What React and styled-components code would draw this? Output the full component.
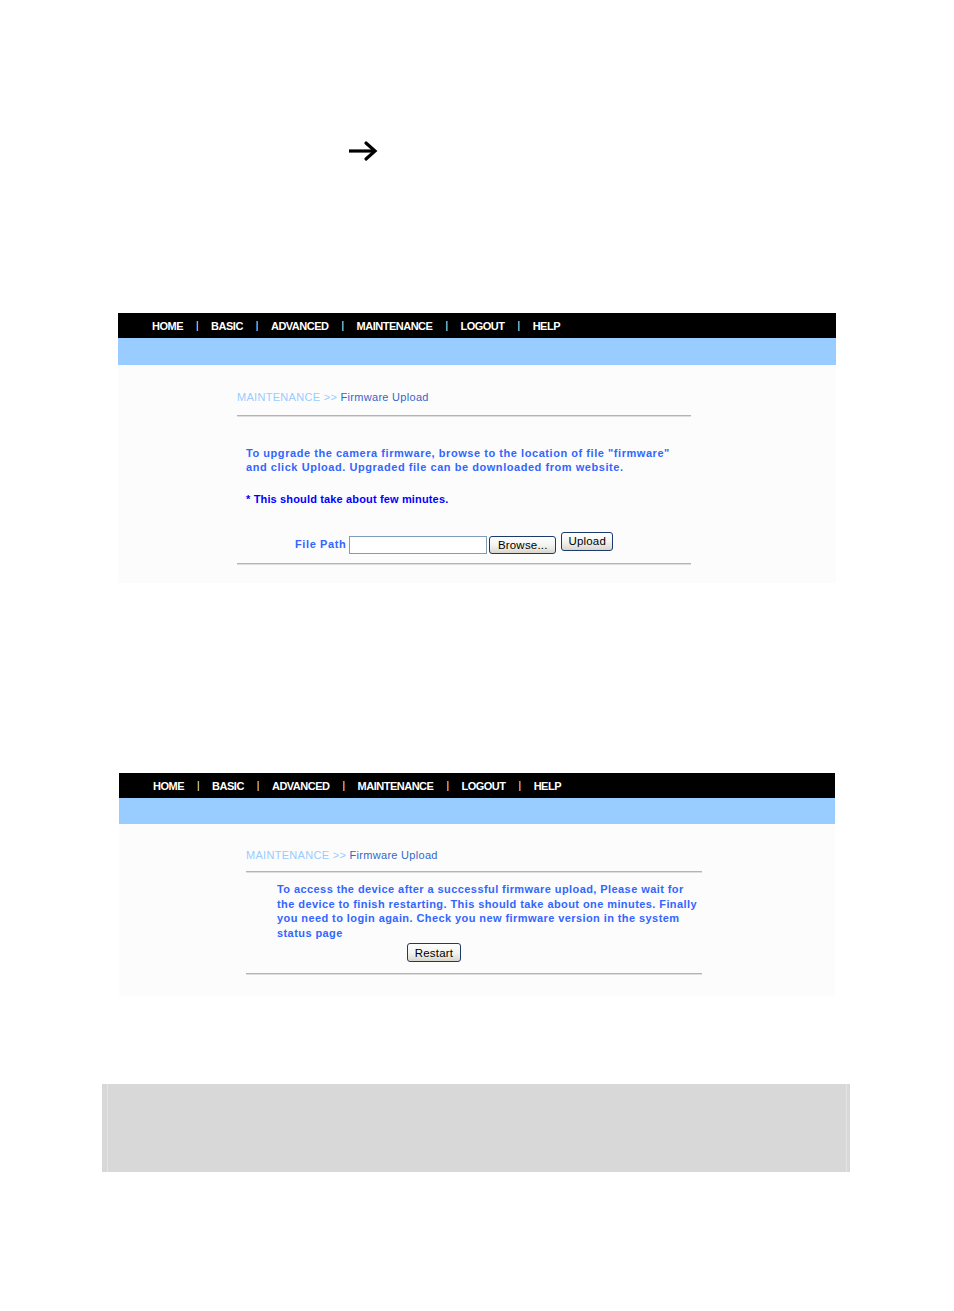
import React from "react";
import styled, { createGlobalStyle } from "styled-components";

const GlobalStyle = createGlobalStyle`
  html, body {
    margin: 0;
    padding: 0;
    background: #ffffff;
  }
  body {
    font-family: "Liberation Sans", Arial, sans-serif;
    width: 954px;
  }
`;

const navItems = ["HOME", "BASIC", "ADVANCED", "MAINTENANCE", "LOGOUT", "HELP"];

const NavMenu = () => (
  <NavBar>
    {navItems.map((item, i) => (
      <React.Fragment key={item}>
        {i > 0 && <NavSep>|</NavSep>}
        <NavItem>{item}</NavItem>
      </React.Fragment>
    ))}
  </NavBar>
);

const Breadcrumb = () => (
  <Crumb>
    <CrumbParent>MAINTENANCE &gt;&gt; </CrumbParent>
    <CrumbCurrent>Firmware Upload</CrumbCurrent>
  </Crumb>
);

const App = () => {
  return (
    <Page>
      <GlobalStyle />
      <ArrowRow>
        <svg width="32" height="22" viewBox="0 0 32 22">
          <path d="M2 11 H27" stroke="#000" strokeWidth="3.2" fill="none" />
          <path
            d="M19 3 L28 11 L19 19"
            stroke="#000"
            strokeWidth="3.2"
            fill="none"
            strokeLinecap="round"
            strokeLinejoin="miter"
          />
        </svg>
      </ArrowRow>

      <Panel $left={118} $width={718} $top={151}>
        <NavMenu />
        <BlueBar $height={27} />
        <Content $pt={25} $pb={18}>
          <Section $left={119} $width={454}>
            <Breadcrumb />
            <Rule $mt={11} />
            <Message $mt={29} $indent={9}>
              To upgrade the camera firmware, browse to the location of file
              "firmware"
              <br />
              and click Upload. Upgraded file can be downloaded from website.
            </Message>
            <Note>* This should take about few minutes.</Note>
            <FileRow>
              <FieldLabel>File Path</FieldLabel>
              <PathInput />
              <XPButton $w={67} $h={18}>Browse...</XPButton>
              <XPButton $w={52} $h={19} $ml={5} $up>Upload</XPButton>
            </FileRow>
            <Rule $mt={10} />
          </Section>
        </Content>
      </Panel>

      <Panel $left={119} $width={716} $top={190}>
        <NavMenu />
        <BlueBar $height={26} />
        <Content $pt={24} $pb={21}>
          <Section $left={127} $width={456}>
            <Breadcrumb />
            <Rule $mt={9} />
            <Message $mt={9} $indent={31} $lh={14.5} $ls={0.42} $nowrap>
              To access the device after a successful firmware upload, Please
              wait for
              <br />
              the device to finish restarting. This should take about one
              minutes. Finally
              <br />
              you need to login again. Check you new firmware version in the
              system
              <br />
              status page
            </Message>
            <RestartRow>
              <XPButton $w={54} $h={19}>Restart</XPButton>
            </RestartRow>
            <Rule $mt={11} />
          </Section>
        </Content>
      </Panel>

      <GrayBox>
        <GrayInner />
      </GrayBox>
    </Page>
  );
};

export default App;

const Page = styled.div`
  width: 954px;
  height: 1311px;
  overflow: hidden;
  display: flex;
  flex-direction: column;
`;

const ArrowRow = styled.div`
  margin: 140px 0 0 347px;
  height: 22px;
  display: flex;
`;

const Panel = styled.div`
  margin-left: ${(p) => p.$left}px;
  margin-top: ${(p) => p.$top}px;
  width: ${(p) => p.$width}px;
  display: flex;
  flex-direction: column;
`;

const NavBar = styled.div`
  height: 25px;
  background: #000000;
  display: flex;
  align-items: center;
  padding-left: 34px;
  color: #ffffff;
  font-family: "Liberation Sans", Arial, sans-serif;
  font-weight: bold;
  font-size: 11px;
  letter-spacing: -0.5px;
`;

const NavItem = styled.span`
  white-space: nowrap;
`;

const NavSep = styled.span`
  font-weight: normal;
  font-size: 10px;
  padding: 0 13px;
`;

const BlueBar = styled.div`
  height: ${(p) => p.$height}px;
  background: #99ccff;
`;

const Content = styled.div`
  background: #fcfcfc;
  padding-top: ${(p) => p.$pt}px;
  padding-bottom: ${(p) => p.$pb}px;
`;

const Section = styled.div`
  margin-left: ${(p) => p.$left}px;
  width: ${(p) => p.$width}px;
`;

const Crumb = styled.div`
  font-size: 11px;
  line-height: 14px;
  letter-spacing: 0.3px;
  white-space: nowrap;
`;

const CrumbParent = styled.span`
  color: #99ccff;
`;

const CrumbCurrent = styled.span`
  color: #3366cc;
`;

const Rule = styled.div`
  margin-top: ${(p) => p.$mt}px;
  height: 0;
  border-top: 1px solid #b4b4b4;
  border-bottom: 1px solid #dedede;
`;

const Message = styled.p`
  margin: ${(p) => p.$mt}px 0 0 ${(p) => p.$indent}px;
  color: #3366ff;
  font-weight: bold;
  font-size: 11px;
  line-height: ${(p) => p.$lh || 14}px;
  letter-spacing: ${(p) => p.$ls ?? 0.55}px;
  white-space: ${(p) => (p.$nowrap ? "nowrap" : "normal")};
`;

const Note = styled.p`
  margin: 18px 0 0 9px;
  color: #0000ff;
  font-weight: bold;
  font-size: 11px;
  line-height: 14px;
  letter-spacing: 0.15px;
`;

const FileRow = styled.div`
  margin-top: 26px;
  margin-left: 58px;
  display: flex;
  align-items: center;
  height: 21px;
`;

const FieldLabel = styled.span`
  color: #3366ff;
  font-weight: bold;
  font-size: 11px;
  letter-spacing: 0.6px;
  margin-right: 3px;
  padding-top: 3px;
`;

const PathInput = styled.div`
  width: 136px;
  height: 16px;
  border: 1px solid #7f9db9;
  background: #ffffff;
  margin-top: 4px;
  margin-right: 2px;
`;

const XPButton = styled.button`
  width: ${(p) => p.$w}px;
  height: ${(p) => p.$h}px;
  margin-left: ${(p) => p.$ml || 0}px;
  margin-top: ${(p) => (p.$up ? -3 : 4)}px;
  padding: 0;
  border: 1px solid #1c3a6e;
  border-radius: 3px;
  background: linear-gradient(#ffffff 0%, #f2f2ee 55%, #d8d6cc 100%);
  font-family: "Liberation Sans", Arial, sans-serif;
  font-size: 11.5px;
  color: #000000;
  letter-spacing: 0.2px;
  line-height: 14px;
`;

const RestartRow = styled.div`
  margin-top: 3px;
  margin-left: 161px;
  display: flex;
  & > button {
    margin-top: 0;
  }
`;

const GrayBox = styled.div`
  margin: 88px 0 0 102px;
  width: 748px;
  height: 88px;
  background: #d8d8d8;
  padding: 0 3px 0 5px;
  box-sizing: border-box;
  display: flex;
`;

const GrayInner = styled.div`
  flex: 1;
  border-left: 1px solid #e4e4e4;
  border-right: 1px solid #e4e4e4;
`;
